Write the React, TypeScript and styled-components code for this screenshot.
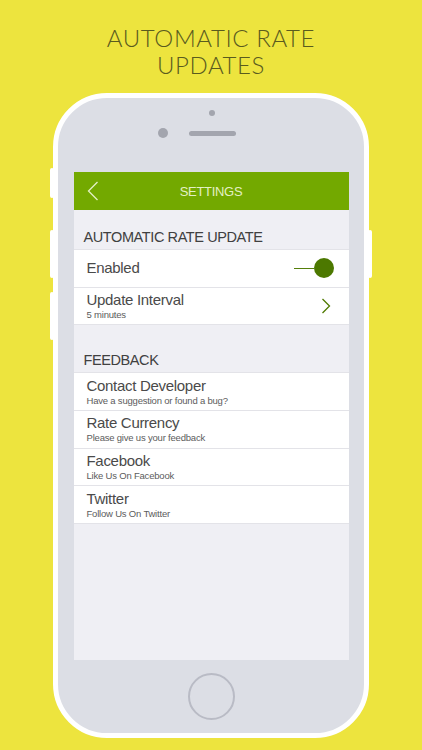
import styled, { createGlobalStyle } from "styled-components";

const GlobalStyle = createGlobalStyle`
  html, body {
    margin: 0;
    padding: 0;
    background: #ede43e;
  }
  * {
    box-sizing: border-box;
  }
`;

const Page = styled.div`
  width: 422px;
  height: 750px;
  overflow: hidden;
  background: #ede43e;
  display: flex;
  flex-direction: column;
  align-items: center;
`;

const Headline = styled.h1`
  margin: 24px 0 0;
  height: 69px;
  font-family: "Lato", "Liberation Sans", sans-serif;
  font-weight: 300;
  font-size: 24px;
  line-height: 27px;
  letter-spacing: 0.6px;
  color: #5a5b1e;
  text-align: center;
`;

const Phone = styled.div`
  position: relative;
  width: 316px;
  height: 645px;
  background: #dcdee5;
  border: 5px solid #ffffff;
  border-radius: 54px;
  display: flex;
  flex-direction: column;
  align-items: center;
`;

const SideButton = styled.div<{ $side: "left" | "right"; $top: number; $h: number }>`
  position: absolute;
  ${(p) => (p.$side === "left" ? "left: -8px;" : "right: -8px;")}
  top: ${(p) => p.$top}px;
  width: 4px;
  height: ${(p) => p.$h}px;
  background: #ffffff;
  border-radius: 2px;
`;

const TopBezel = styled.div`
  position: relative;
  width: 100%;
  height: 74px;
`;

const Camera = styled.div<{ $x: number; $y: number; $d: number }>`
  position: absolute;
  left: ${(p) => p.$x}px;
  top: ${(p) => p.$y}px;
  width: ${(p) => p.$d}px;
  height: ${(p) => p.$d}px;
  border-radius: 50%;
  background: #a3a5ae;
`;

const Speaker = styled.div`
  position: absolute;
  left: 131px;
  top: 33px;
  width: 47px;
  height: 5px;
  border-radius: 3px;
  background: #a3a5ae;
`;

const Screen = styled.div`
  width: 275px;
  height: 488px;
  background: #efeff4;
  display: flex;
  flex-direction: column;
  font-family: "Liberation Sans", Arial, sans-serif;
`;

const NavBar = styled.div`
  position: relative;
  height: 38px;
  background: #73a900;
  display: flex;
  align-items: center;
  justify-content: center;
  flex-shrink: 0;
`;

const BackButton = styled.div`
  position: absolute;
  left: 13px;
  top: 9px;
  width: 12px;
  height: 20px;
  display: flex;
`;

const NavTitle = styled.div`
  font-size: 13px;
  color: #e3f0c4;
  letter-spacing: -0.3px;
  font-weight: 400;
`;

const SectionHeader = styled.div<{ $top: number }>`
  padding: ${(p) => p.$top}px 10px 0;
  height: ${(p) => p.$top + 20}px;
  font-size: 14.5px;
  color: #404040;
  letter-spacing: -0.4px;
  line-height: 16px;
`;

const Group = styled.div`
  background: #ffffff;
  border-top: 1px solid #e3e3e8;
  display: flex;
  flex-direction: column;
`;

const Row = styled.div`
  height: 37.7px;
  border-bottom: 1px solid #e3e3e8;
  padding: 0 12px 0 13px;
  display: flex;
  align-items: center;
`;

const RowText = styled.div`
  flex: 1;
  display: flex;
  flex-direction: column;
  justify-content: center;
`;

const RowTitle = styled.div`
  font-size: 15px;
  line-height: 16px;
  color: #4a4a4a;
  letter-spacing: -0.3px;
`;

const RowSub = styled.div`
  margin-top: 1px;
  font-size: 9.5px;
  line-height: 11px;
  color: #5c5c5c;
  letter-spacing: -0.2px;
`;

const Toggle = styled.div`
  display: flex;
  align-items: center;
  margin-right: 3px;
`;

const ToggleLine = styled.div`
  width: 20px;
  height: 1.5px;
  background: #557f0a;
`;

const ToggleKnob = styled.div`
  width: 20px;
  height: 20px;
  border-radius: 50%;
  background: #4c7800;
`;

const Chevron = styled.div`
  width: 10px;
  height: 16px;
  display: flex;
  margin-right: 6px;
`;

const BottomBezel = styled.div`
  flex: 1;
  width: 100%;
  display: flex;
  align-items: center;
  justify-content: center;
`;

const HomeButton = styled.div`
  width: 47px;
  height: 47px;
  border-radius: 50%;
  border: 2px solid #b9bbc5;
`;

const rows1 = [
  { title: "Enabled", toggle: true },
  { title: "Update Interval", sub: "5 minutes", chevron: true },
];

const rows2 = [
  { title: "Contact Developer", sub: "Have a suggestion or found a bug?" },
  { title: "Rate Currency", sub: "Please give us your feedback" },
  { title: "Facebook", sub: "Like Us On Facebook" },
  { title: "Twitter", sub: "Follow Us On Twitter" },
];

type RowData = { title: string; sub?: string; toggle?: boolean; chevron?: boolean };

const SettingsRow = ({ row }: { row: RowData }) => (
  <Row>
    <RowText>
      <RowTitle>{row.title}</RowTitle>
      {row.sub && <RowSub>{row.sub}</RowSub>}
    </RowText>
    {row.toggle && (
      <Toggle>
        <ToggleLine />
        <ToggleKnob />
      </Toggle>
    )}
    {row.chevron && (
      <Chevron>
        <svg width="10" height="16" viewBox="0 0 10 16">
          <path d="M1.5 1 L8.5 8 L1.5 15" fill="none" stroke="#4f7a00" strokeWidth="1.3" />
        </svg>
      </Chevron>
    )}
  </Row>
);

export default function App() {
  return (
    <>
      <GlobalStyle />
      <Page>
        <Headline>
          AUTOMATIC RATE
          <br />
          UPDATES
        </Headline>
        <Phone>
          <SideButton $side="left" $top={70} $h={30} />
          <SideButton $side="left" $top={132} $h={48} />
          <SideButton $side="left" $top={194} $h={48} />
          <SideButton $side="right" $top={132} $h={48} />
          <TopBezel>
            <Camera $x={151} $y={12} $d={6} />
            <Camera $x={100} $y={30} $d={10} />
            <Speaker />
          </TopBezel>
          <Screen>
            <NavBar>
              <BackButton>
                <svg width="12" height="20" viewBox="0 0 12 20">
                  <path d="M10.5 1 L1.5 10 L10.5 19" fill="none" stroke="#e3f0c4" strokeWidth="1.3" />
                </svg>
              </BackButton>
              <NavTitle>SETTINGS</NavTitle>
            </NavBar>
            <SectionHeader $top={19}>AUTOMATIC RATE UPDATE</SectionHeader>
            <Group>
              {rows1.map((r) => (
                <SettingsRow key={r.title} row={r} />
              ))}
            </Group>
            <SectionHeader $top={27}>FEEDBACK</SectionHeader>
            <Group>
              {rows2.map((r) => (
                <SettingsRow key={r.title} row={r} />
              ))}
            </Group>
          </Screen>
          <BottomBezel>
            <HomeButton />
          </BottomBezel>
        </Phone>
      </Page>
    </>
  );
}
